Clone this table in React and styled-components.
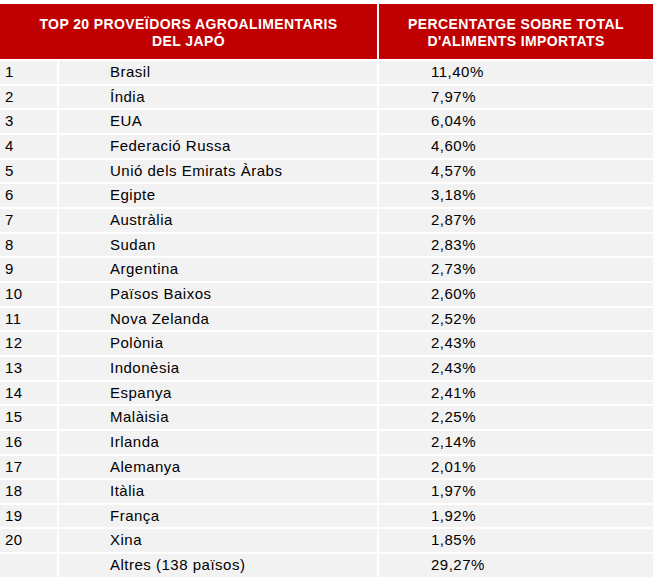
import React from 'react'
import styled, { createGlobalStyle } from 'styled-components'

const GlobalStyle = createGlobalStyle`
  html, body {
    margin: 0;
    padding: 0;
    background: #ffffff;
  }
  body {
    font-family: "Liberation Sans", Arial, sans-serif;
  }
`

const rows = [
  ['1', 'Brasil', '11,40%'],
  ['2', 'Índia', '7,97%'],
  ['3', 'EUA', '6,04%'],
  ['4', 'Federació Russa', '4,60%'],
  ['5', 'Unió dels Emirats Àrabs', '4,57%'],
  ['6', 'Egipte', '3,18%'],
  ['7', 'Austràlia', '2,87%'],
  ['8', 'Sudan', '2,83%'],
  ['9', 'Argentina', '2,73%'],
  ['10', 'Països Baixos', '2,60%'],
  ['11', 'Nova Zelanda', '2,52%'],
  ['12', 'Polònia', '2,43%'],
  ['13', 'Indonèsia', '2,43%'],
  ['14', 'Espanya', '2,41%'],
  ['15', 'Malàisia', '2,25%'],
  ['16', 'Irlanda', '2,14%'],
  ['17', 'Alemanya', '2,01%'],
  ['18', 'Itàlia', '1,97%'],
  ['19', 'França', '1,92%'],
  ['20', 'Xina', '1,85%'],
  ['', 'Altres (138 països)', '29,27%'],
]

const Page = styled.div`
  padding-top: 4px;
  width: 653px;
`

const Table = styled.div`
  display: grid;
  grid-template-columns: 57px 318px 274px;
  grid-template-rows: 55px;
  grid-auto-rows: 22.67px;
  column-gap: 2px;
  row-gap: 2px;
`

const HeadCell = styled.div`
  grid-column: ${(props) => props.span};
  background: #c00000;
  color: #ffffff;
  font-weight: bold;
  font-size: 14px;
  letter-spacing: 0.4px;
  line-height: 17px;
  text-align: center;
  display: flex;
  align-items: center;
  justify-content: center;
  padding-top: 3px;
  box-sizing: border-box;
`

const Cell = styled.div`
  background: #f2f2f2;
  color: #000000;
  font-size: 15px;
  letter-spacing: 0.5px;
  line-height: 22px;
  padding-left: ${(props) => props.indent}px;
  white-space: nowrap;
`

const App = () => (
  <Page>
    <GlobalStyle />
    <Table>
      <HeadCell span="1 / 3">
        TOP 20 PROVEÏDORS AGROALIMENTARIS<br />DEL JAPÓ
      </HeadCell>
      <HeadCell span="3 / 4">
        PERCENTATGE SOBRE TOTAL<br />D'ALIMENTS IMPORTATS
      </HeadCell>
      {rows.map(([rank, country, share], index) => (
        <React.Fragment key={index}>
          <Cell indent={5}>{rank}</Cell>
          <Cell indent={51}>{country}</Cell>
          <Cell indent={52}>{share}</Cell>
        </React.Fragment>
      ))}
    </Table>
  </Page>
)

export default App
